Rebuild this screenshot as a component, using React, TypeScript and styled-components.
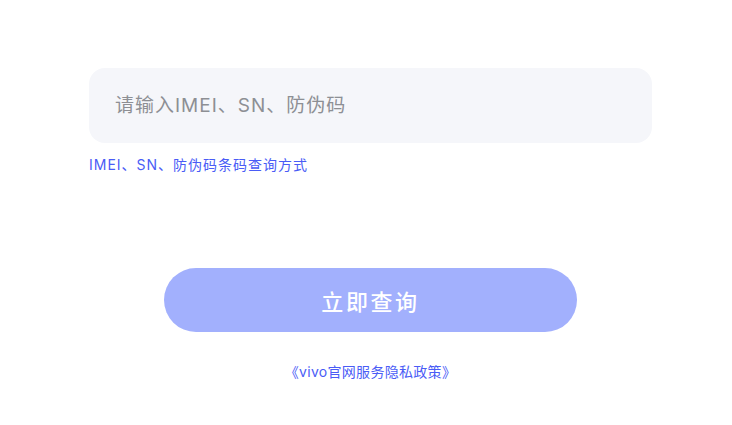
import styled, { createGlobalStyle } from 'styled-components';

const GlobalStyle = createGlobalStyle`
    body {
        margin: 0;
        background: #ffffff;
        font-family: Inter, "Noto Sans CJK SC", sans-serif;
    }
`;

export default function App(): JSX.Element {
    return (
        <Page>
            <GlobalStyle />
            <Form>
                <InputBox placeholder="请输入IMEI、SN、防伪码" />
                <HelpLink>IMEI、SN、防伪码条码查询方式</HelpLink>
                <SubmitButton type="button">立即查询</SubmitButton>
                <PolicyLink>《vivo官网服务隐私政策》</PolicyLink>
            </Form>
        </Page>
    )
}

const Page = styled.div`
    width: 732px;
    height: 425px;
    padding: 68px 0 0 89px;
    box-sizing: border-box;
`;

const Form = styled.div`
    width: 563px;
    display: flex;
    flex-direction: column;
    align-items: flex-start;
`;

const InputBox = styled.input`
    width: 100%;
    height: 75px;
    box-sizing: border-box;
    border: none;
    outline: none;
    border-radius: 16px;
    background: #f5f6fa;
    padding: 0 26px;
    font-family: Inter, "Noto Sans CJK SC", sans-serif;
    font-size: 19px;
    letter-spacing: 1px;
    color: #333;

    &::placeholder {
        color: #8d8f94;
    }
`;

const HelpLink = styled.a`
    margin-top: 12px;
    font-size: 14px;
    line-height: 20px;
    letter-spacing: 1px;
    color: #4a5cf6;
    cursor: pointer;
`;

const SubmitButton = styled.button`
    align-self: center;
    margin-top: 93px;
    width: 413px;
    height: 64px;
    border: none;
    border-radius: 32px;
    background: #a2b0fd;
    color: #ffffff;
    font-family: Inter, "Noto Sans CJK SC", sans-serif;
    font-size: 22px;
    letter-spacing: 2.6px;
    font-weight: 500;
    cursor: pointer;
`;

const PolicyLink = styled.a`
    align-self: center;
    margin-top: 30px;
    font-size: 14px;
    line-height: 20px;
    letter-spacing: 0.3px;
    color: #4a5cf6;
    cursor: pointer;
`;
